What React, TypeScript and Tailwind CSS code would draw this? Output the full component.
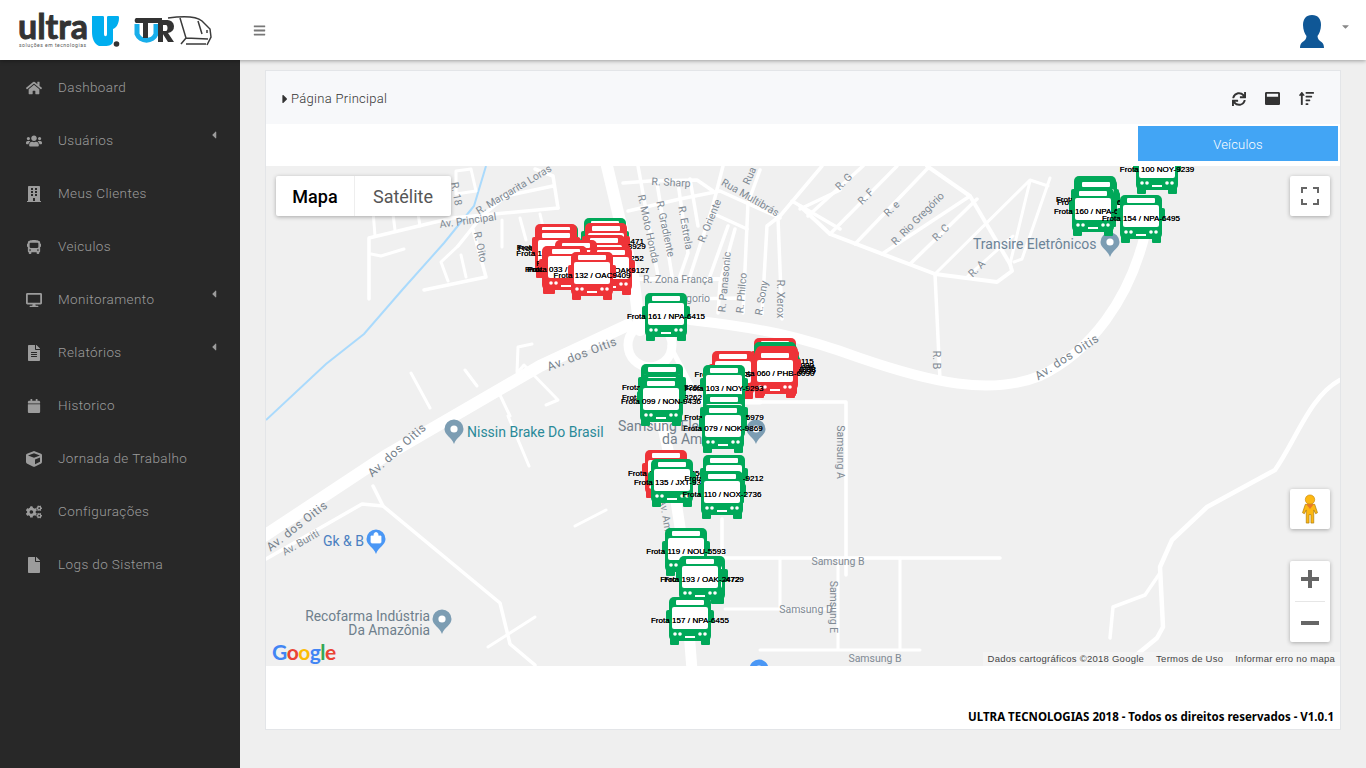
/* ── Ultra TUR dashboard: vehicle map ── */

import React from 'react';
import {
  FaBars, FaBuilding, FaBus, FaCalendar, FaCaretDown, FaCaretLeft, FaCaretRight, FaCogs, FaCube,
  FaDesktop, FaFile, FaFileAlt, FaHome, FaSortAmountUp, FaSync, FaUsers, FaWindowMaximize,
} from 'react-icons/fa';

const menu = [
  { label: 'Dashboard', icon: FaHome },
  { label: 'Usuários', icon: FaUsers, sub: true },
  { label: 'Meus Clientes', icon: FaBuilding },
  { label: 'Veiculos', icon: FaBus },
  { label: 'Monitoramento', icon: FaDesktop, sub: true },
  { label: 'Relatórios', icon: FaFileAlt, sub: true },
  { label: 'Historico', icon: FaCalendar },
  { label: 'Jornada de Trabalho', icon: FaCube },
  { label: 'Configurações', icon: FaCogs },
  { label: 'Logs do Sistema', icon: FaFile },
];

type Bus = { x: number; y: number; c: 'g' | 'r'; t: string };

// x = centre of the marker, y = top of the marker, in page pixels. Later ones lie on top.
const buses: Bus[] = [
  { x: 1157, y: 146, c: 'g', t: 'Frota 100 NOY-9239' },
  { x: 1095, y: 176, c: 'g', t: 'Frota 148 / NPA-6388' },
  { x: 1096, y: 179, c: 'g', t: 'Frota 155 / NPA-6421' },
  { x: 1093, y: 188, c: 'g', t: 'Frota 160 / NPA-6399' },
  { x: 1141, y: 195, c: 'g', t: 'Frota 154 / NPA-6495' },
  { x: 557, y: 225, c: 'g', t: 'Frota 146 / NPA-6302' },
  { x: 605, y: 218, c: 'g', t: 'Frota 141 / NPA-6471' },
  { x: 556, y: 224, c: 'r', t: 'Frota 150 / OAK-9311' },
  { x: 606, y: 223, c: 'r', t: 'Frota 138 / OAK-3929' },
  { x: 556, y: 230, c: 'r', t: 'Frota 152 / OAK-4180' },
  { x: 604, y: 235, c: 'r', t: 'Frota 129 / OAK-8252' },
  { x: 576, y: 240, c: 'r', t: 'Frota 120 / OAK-7710' },
  { x: 611, y: 247, c: 'r', t: 'Frota 127 / OAK9127' },
  { x: 565, y: 246, c: 'r', t: 'Frota 031 / JXT-2044' },
  { x: 563, y: 246, c: 'r', t: 'Frota 032 / JXT-2046' },
  { x: 566, y: 246, c: 'r', t: 'Frota 033 / JXT-2040' },
  { x: 592, y: 252, c: 'r', t: 'Frota 132 / OAC9409' },
  { x: 666, y: 293, c: 'g', t: 'Frota 161 / NPA-6415' },
  { x: 775, y: 338, c: 'r', t: 'Frota 115 / PHB-6115' },
  { x: 775, y: 342, c: 'g', t: 'Frota 116 / PHB-6090' },
  { x: 776, y: 344, c: 'g', t: 'Frota 117 / PHB-6096' },
  { x: 777, y: 346, c: 'r', t: 'Frota 118 / PHB-6098' },
  { x: 776, y: 348, c: 'r', t: 'Frota 121 / PHB-6099' },
  { x: 733, y: 351, c: 'r', t: 'Frota 105 / JXS-8648' },
  { x: 775, y: 350, c: 'r', t: 'Frota 060 / PHB-6090' },
  { x: 662, y: 364, c: 'g', t: 'Frota 094 / NON-3269' },
  { x: 662, y: 374, c: 'g', t: 'Frota 097 / NON-3262' },
  { x: 724, y: 365, c: 'g', t: 'Frota 103 / NOY-9293' },
  { x: 661, y: 378, c: 'g', t: 'Frota 099 / NON-9436' },
  { x: 724, y: 394, c: 'g', t: 'Frota 081 / NOK-5979' },
  { x: 723, y: 405, c: 'g', t: 'Frota 079 / NOK-9869' },
  { x: 666, y: 450, c: 'r', t: 'Frota 136 / JXT-9350' },
  { x: 672, y: 459, c: 'g', t: 'Frota 135 / JXT-9331' },
  { x: 724, y: 455, c: 'g', t: 'Frota 112 / NOX-9212' },
  { x: 722, y: 471, c: 'g', t: 'Frota 110 / NOX-2736' },
  { x: 686, y: 528, c: 'g', t: 'Frota 119 / NOU-5593' },
  { x: 704, y: 556, c: 'g', t: 'Frota 170 / OAK-4729' },
  { x: 700, y: 556, c: 'g', t: 'Frota 193 / OAK-2472' },
  { x: 690, y: 597, c: 'g', t: 'Frota 157 / NPA-6455' },
];

function BusMarker({ bus }: { bus: Bus }) {
  const color = bus.c === 'g' ? '#00a859' : '#ee3338';
  return (
    <>
      <svg
        viewBox="0 0 48 48"
        className="absolute w-12 h-12"
        style={{ left: bus.x - 24 - 266, top: bus.y - 166 }}
      >
        <rect x="0" y="13" width="5" height="13" rx="2" fill={color} />
        <rect x="43" y="13" width="5" height="13" rx="2" fill={color} />
        <rect x="3" y="0" width="42" height="44" rx="5" fill={color} />
        <rect x="4" y="41" width="9" height="7" rx="1" fill={color} />
        <rect x="35" y="41" width="9" height="7" rx="1" fill={color} />
        <rect x="10" y="3" width="28" height="5" rx="1" fill="#fff" />
        <rect x="6" y="10" width="36" height="22" rx="2" fill="#fff" />
        <circle cx="9" cy="37" r="1.8" fill="#fff" />
        <circle cx="14" cy="37" r="1.8" fill="#fff" />
        <circle cx="34" cy="37" r="1.8" fill="#fff" />
        <circle cx="39" cy="37" r="1.8" fill="#fff" />
        <rect x="19" y="39" width="10" height="2" fill="#fff" />
      </svg>
      <span
        className="absolute -translate-x-1/2 whitespace-nowrap text-[8px] leading-[10px] tracking-[0.05px] text-black [text-shadow:0_0_0.5px_#000] font-['Liberation_Sans',sans-serif]"
        style={{ left: bus.x - 266, top: bus.y - 166 + 19 }}
      >
        {bus.t}
      </span>
    </>
  );
}

function Pin({ x, y, color = '#7c9db3', shop = false }: { x: number; y: number; color?: string; shop?: boolean }) {
  return (
    <g transform={`translate(${x} ${y})`}>
      <path d="M-9.5 0a9.5 9.5 0 1 1 19 0c0 6-7 8-9.5 15c-2.5-7-9.5-9-9.5-15z" fill={color} />
      {shop ? (
        <path d="M-5-3h10v6a1 1 0 0 1-1 1h-8a1 1 0 0 1-1-1zM-2-3v-1.5a2 2 0 0 1 4 0V-3" fill="#fff" stroke="#fff" strokeWidth="0.8" />
      ) : (
        <circle r="3.6" fill="#fff" />
      )}
    </g>
  );
}

// [d, width]
const roads: [string, number][] = [
  ['M258 540L385 456L540 366L628 325', 12],
  ['M690 320C760 328 800 336 860 358C930 382 990 396 1040 376C1090 352 1130 300 1146 230', 10],
  ['M1134 166L1160 178', 6],
  ['M607 166L633 276L640 330', 12],
  ['M650 368L668 450L682 540L692 670', 11],
  ['M670 346L700 402L760 402', 5],
  ['M760 402H846V575', 3.5],
  ['M722 519V558H1000', 3.5],
  ['M780 558V609M725 609H838M838 558V650M760 650H920M900 558V650', 3],
  // NW block
  ['M369 299V238L452 218L558 208', 3.5],
  ['M558 208L553 176L535 169', 3.5],
  ['M458 246L482 216L506 196L553 186', 3.5],
  ['M424 290L486 277L473 230', 3.5],
  ['M458 246L441 262L448 281', 3],
  ['M461 255L466 277', 3],
  ['M371 254L381 256L404 249', 3],
  ['M456 171L471 169L476 191L456 194Z', 3],
  ['M375 236L372 198M395 230L390 190M420 226L415 195', 3],
  ['M502 220L502 247M520 218L526 240M540 214L546 240', 3],
  ['M411 373L430 408M465 370L477 386M499 393L510 416', 3],
  ['M517 372L518 347L532 344M518 372L524 365L558 400L546 405', 3],
  // centre streets
  ['M623 183L650 181L697 180L713 191', 3.5],
  ['M628 211L680 199L720 191L780 218', 3.5],
  ['M638 166L658 276M657 183L672 276', 3.5],
  ['M678 183L688 253L680 276M690 179L698 226', 3.5],
  ['M723 166L712 209L690 276', 3.5],
  ['M712 213L747 229M728 226L710 276M735 229L720 283L718 313', 3.5],
  ['M748 203L743 313M748 203L760 170', 3.5],
  ['M792 201L840 229M780 216L822 166M780 216L767 226L762 314M778 218L782 319', 3.5],
  ['M800 209L840 190', 3.5],
  ['M633 279H727', 4],
  ['M683 299L743 298', 3.5],
  // lower left
  ['M373 486L383 506L500 603L510 644L535 665', 3.5],
  ['M266 559L362 504L383 506', 3.5],
  ['M488 647L535 617', 3],
  ['M575 526L606 510', 3],
  ['M508 416L529 466', 3],
  // NE block
  ['M800 206L830 234L935 274L997 282L1012 271L1010 264L970 196L927 166', 4],
  ['M808 216L863 166M830 234L897 166M855 244L928 168M882 254L970 196M910 264L977 199', 3.5],
  ['M935 274L1030 180L1048 186M968 276L1013 236M1010 264L1030 181M1014 262L1022 259L1050 178', 3],
  ['M935 274L940 380', 3.5],
  // SE right
  ['M1340 380C1310 396 1296 440 1275 470L1207 507L1172 540L1160 567L1163 627L1157 638L1123 666', 4.5],
  ['M1160 573L1145 595L1113 607L1110 638', 3.5],
];

const streetLabels: [string, number, number, number][] = [
  ['R. Sharp', 671, 186, 3],
  ['R. Margarita Loras', 514, 193, -31],
  ['Av. Principal', 468, 224, -8],
  ['R. Oito', 480, 250, 78],
  ['R. 18', 456, 197, 80],
  ['R. Moto Honda', 648, 232, 78],
  ['R. Gradiente', 665, 232, 78],
  ['R. Estrela', 685, 231, 80],
  ['R. Oriente', 710, 224, -68],
  ['Rua Multibrás', 750, 201, 30],
  ['Rua', 750, 179, -65],
  ['R. Zona França', 678, 283, 0],
  ['gorio', 698, 302, 0],
  ['R. Panasonic', 725, 285, -85],
  ['R. Philco', 742, 296, -85],
  ['R. Sony', 762, 301, -80],
  ['R. Xerox', 780, 302, 90],
  ['R. G', 844, 185, -45],
  ['R. F', 866, 200, -45],
  ['R. e', 892, 212, -45],
  ['R. Rio Gregório', 918, 222, -45],
  ['R. C', 941, 236, -45],
  ['R. A', 977, 272, -45],
  ['R. B', 936, 363, 90],
  ['Samsung A', 840, 455, 90],
  ['Samsung B', 838, 565, 0],
  ['Samsung D', 806, 613, 0],
  ['Samsung E', 833, 610, 90],
  ['Samsung B', 875, 662, 0],
  ['Av. Amazonas', 668, 535, 80],
  ['Av. Buriti', 301, 546, -30],
];

const avenueLabels: [string, number, number, number][] = [
  ['Av. dos Oitis', 582, 358, -21],
  ['Av. dos Oitis', 397, 454, -42],
  ['Av. dos Oitis', 297, 530, -38],
  ['Av. dos Oitis', 1067, 361, -33],
];

function MapDrawing() {
  return (
    <svg viewBox="266 166 1074 500" className="absolute inset-0 w-full h-full" fontFamily="Roboto, sans-serif">
      <path
        d="M486 166L474 206L444 243L403 289L364 334L326 364L266 420"
        fill="none"
        stroke="#aadafc"
        strokeWidth="2"
      />
      {roads.map(([d, w], i) => (
        <path key={i} d={d} fill="none" stroke="#fff" strokeWidth={w} strokeLinecap="round" strokeLinejoin="round" />
      ))}
      <circle cx="650" cy="345" r="22" fill="none" stroke="#fff" strokeWidth="9" />
      {streetLabels.map(([t, x, y, r], i) => (
        <text key={i} x={x} y={y} textAnchor="middle" fontSize="10.5" fill="#7f8a94" transform={`rotate(${r} ${x} ${y - 3})`}>
          {t}
        </text>
      ))}
      {avenueLabels.map(([t, x, y, r], i) => (
        <text key={i} x={x} y={y} textAnchor="middle" fontSize="12" letterSpacing="0.6" fill="#76818b" transform={`rotate(${r} ${x} ${y - 4})`}>
          {t}
        </text>
      ))}
      <text x="467" y="437" fontSize="14" fill="#2a8a99">Nissin Brake Do Brasil</text>
      <text x="618" y="431" fontSize="14" fill="#74818c">Samsung Ele</text>
      <text x="662" y="444" fontSize="14" fill="#74818c">da Ama</text>
      <text x="973" y="249" fontSize="14" fill="#6b8397">Transire Eletrônicos</text>
      <text x="323" y="546" fontSize="14" fill="#4a7fc1">Gk &amp; B</text>
      <text x="430" y="621" fontSize="13.8" fill="#6e7f8c" textAnchor="end">Recofarma Indústria</text>
      <text x="430" y="635" fontSize="13.8" fill="#6e7f8c" textAnchor="end">Da Amazônia</text>
      <Pin x={454} y={429} />
      <Pin x={756} y={429} />
      <Pin x={1110} y={242} />
      <Pin x={442} y={619} />
      <Pin x={376} y={539} color="#4a97f5" shop />
      <Pin x={759} y={669} color="#4a97f5" />
    </svg>
  );
}

function Logo() {
  return (
    <svg viewBox="0 0 240 60" className="w-[240px] h-[60px]">
      <text
        x="18"
        y="39"
        fontFamily="Lato, sans-serif"
        fontWeight="700"
        fontSize="34"
        fill="#333"
        stroke="#333"
        strokeWidth="0.9"
        textLength="70"
        lengthAdjust="spacingAndGlyphs"
      >
        ultra
      </text>
      <text x="19" y="46.5" fontFamily="Roboto, sans-serif" fontSize="5" fill="#555" textLength="67">
        soluções em tecnologias
      </text>
      <path d="M92 16h11c1 0 1 1 1 2v16c0 3 3 3 3 0V18c0-1 0-2 1-2h10c1 0 1 1 1 2c0 6-3 10-6 11v12c0 4-4 5-8 5h-6c-5-2-7-8-7-14z" fill="#00aeef" />
      <circle cx="116.500" cy="44" r="2.800" fill="#333" />
      <path d="M137 24V34a10 9 0 0 0 19 0V24" fill="none" stroke="#18aeea" strokeWidth="5" />
      <path d="M136 18h26v5h-14v15h-5V23h-7a3 3 0 0 1 0-5z" fill="#333" />
      <path d="M158 20h5v22h-5zM161 20h6a6.500 6.500 0 0 1 1 13l6 9h-6l-7-11h5c2 0 2-6 0-6h-5z" fill="#333" />
      <path d="M168 18c14-2 28-2 34 3l8 8l1 8l-4 8" fill="none" stroke="#3b3b3b" strokeWidth="1.5" />
      <path d="M180 18l6 20l-5 6M186 38l22 1M186 44h20M198 21l4 13M207 30v3" fill="none" stroke="#3b3b3b" strokeWidth="1.500" />
    </svg>
  );
}

function GoogleLogo() {
  return (
    <div className="absolute left-[6px] bottom-[2px] text-[21px] leading-6 font-bold tracking-[-0.5px] font-['Lato',sans-serif]">
      <span className="text-[#4285f4]">G</span>
      <span className="text-[#ea4335]">o</span>
      <span className="text-[#fbbc05]">o</span>
      <span className="text-[#4285f4]">g</span>
      <span className="text-[#34a853]">l</span>
      <span className="text-[#ea4335]">e</span>
    </div>
  );
}

export default function App() {
  return (
    <div className="flex flex-col h-screen overflow-hidden bg-[#efefef] font-['Roboto',sans-serif]">
      <header className="relative z-10 flex items-center h-[60px] shrink-0 bg-white shadow-[0_1px_4px_rgba(0,0,0,0.35)]">
        <div className="w-[240px]">
          <Logo />
        </div>
        <FaBars size={13} className="ml-[13px] text-[#777]" />
        <div className="ml-auto flex items-center pr-[15px]">
          <svg viewBox="0 0 24 33" className="w-6 h-[33px] mt-[3px]">
            <path
              d="M12 0c6 0 9 4 9 10c0 5-2 9-3.500 11c0 3 2 5 4 6c1.500 1 2.500 3 2.500 6H0c0-3 1-5 2.500-6c2-1 4-3 4-6C5 19 3 15 3 10C3 4 6 0 12 0z"
              fill="#0f5796"
            />
          </svg>
          <FaCaretDown size={11} className="ml-[16px] mb-2 text-[#888]" />
        </div>
      </header>

      <div className="flex flex-1 min-h-0">
        <aside className="w-[240px] shrink-0 bg-[#282828]">
          <ul className="pt-px">
            {menu.map((item) => (
              <li key={item.label} className="relative flex items-center h-[53px] text-[#9c9c9c]">
                <span className="flex justify-center w-[18px] ml-[25px]">
                  <item.icon size={item.label === 'Veiculos' || item.label === 'Historico' ? 14 : 16} />
                </span>
                <span className="ml-[15px] text-[13.5px] font-light tracking-[0.4px]">{item.label}</span>
                {item.sub && <FaCaretLeft size={12} className="absolute left-[208px] top-[15px]" />}
              </li>
            ))}
          </ul>
        </aside>

        <main className="flex-1 min-w-0 pt-[10px] px-[25px]">
          <div className="h-[660px] bg-white border border-[#e3e5e8]">
            <div className="flex items-center h-[53px] bg-[#f7f8fa] pt-[2px] pl-[12px] pr-[26px]">
              <FaCaretRight size={14} className="text-[#333]" />
              <span className="-ml-px text-[13px] text-[#333] tracking-[0.3px] font-light">Página Principal</span>
              <div className="ml-auto flex items-center gap-[19px] text-[#333]">
                <FaSync size={14} />
                <FaWindowMaximize size={15} />
                <FaSortAmountUp size={15} />
              </div>
            </div>

            <div className="flex justify-end h-[42px] pt-[2px] pr-[2px]">
              <div className="flex items-center justify-center w-[200px] h-[35px] pt-[2px] bg-[#42a5f5] text-white text-[13px] font-light tracking-[0.2px]">
                Veículos
              </div>
            </div>

            <div className="relative h-[500px] overflow-hidden bg-[#f0f0f0]">
              <MapDrawing />

              {buses.map((b) => (
                <BusMarker key={b.t} bus={b} />
              ))}

              <div className="absolute left-[10px] top-[10px] flex h-10 bg-white rounded-[2px] shadow-[0_1px_4px_rgba(0,0,0,0.3)] text-[18px]">
                <div className="flex items-center justify-center w-[79px] border-r border-[#eee] font-medium text-black">Mapa</div>
                <div className="flex items-center justify-center w-[96px] text-[#565656]">Satélite</div>
              </div>

              <div className="absolute right-[10px] top-[10px] flex items-center justify-center w-10 h-10 bg-white rounded-[2px] shadow-[0_1px_4px_rgba(0,0,0,0.3)]">
                <svg viewBox="0 0 18 18" className="w-[18px] h-[18px]">
                  <path d="M0 6V0h6v2H2v4zM12 0h6v6h-2V2h-4zM0 12h2v4h4v2H0zM16 12h2v6h-6v-2h4z" fill="#666" />
                </svg>
              </div>

              <div className="absolute right-[10px] top-[323px] flex items-center justify-center w-10 h-10 bg-white rounded-[2px] shadow-[0_1px_4px_rgba(0,0,0,0.3)]">
                <svg viewBox="0 0 18 32" className="w-[18px] h-[30px]">
                  <circle cx="9" cy="6" r="5" fill="#fdb813" stroke="#c98a0a" strokeWidth="0.7" />
                  <path d="M4 11h10l3 9l-2 1l-2-4v14h-3v-9h-2v9H5V17l-2 4l-2-1z" fill="#fdb813" stroke="#a8790e" strokeWidth="0.7" />
                  <path d="M5 11h8l-4 5z" fill="#e8792b" />
                </svg>
              </div>

              <div className="absolute right-[10px] top-[395px] flex flex-col items-center w-10 h-[81px] bg-white rounded-[2px] shadow-[0_1px_4px_rgba(0,0,0,0.3)]">
                <div className="flex items-center justify-center h-10 pb-[4px]">
                  <svg viewBox="0 0 18 18" className="w-[18px] h-[18px]">
                    <path d="M7 0h4v7h7v4h-7v7H7v-7H0V7h7z" fill="#666" />
                  </svg>
                </div>
                <div className="w-[30px] h-px bg-[#e6e6e6]" />
                <div className="flex items-center justify-center h-10 pt-[2px]">
                  <svg viewBox="0 0 18 18" className="w-[18px] h-[18px]">
                    <path d="M0 7h18v4H0z" fill="#666" />
                  </svg>
                </div>
              </div>

              <GoogleLogo />

              <div className="absolute right-0 bottom-0 flex items-center h-[14px] pl-[5px] pr-[5px] bg-[#f5f5f5]/70 text-[9.500px] text-[#444] tracking-[0.25px] font-['Liberation_Sans',sans-serif]">
                <span>Dados cartográficos ©2018 Google</span>
                <span className="ml-[12px]">Termos de Uso</span>
                <span className="ml-[12px]">Informar erro no mapa</span>
              </div>
            </div>

            <div className="flex items-end justify-end h-[63px] pb-[4px] pr-[6px] text-[11.500px] font-bold text-black font-['Noto_Sans',sans-serif]">
              ULTRA TECNOLOGIAS 2018 - Todos os direitos reservados - V1.0.1
            </div>
          </div>
        </main>
      </div>
    </div>
  );
}
